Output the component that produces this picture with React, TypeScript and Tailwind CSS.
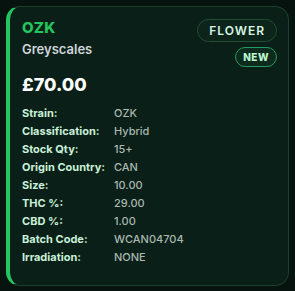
import React from "react";

const rows: [string, string][] = [
  ["Strain:", "OZK"],
  ["Classification:", "Hybrid"],
  ["Stock Qty:", "15+"],
  ["Origin Country:", "CAN"],
  ["Size:", "10.00"],
  ["THC %:", "29.00"],
  ["CBD %:", "1.00"],
  ["Batch Code:", "WCAN04704"],
  ["Irradiation:", "NONE"],
];

export default function App() {
  return (
    <div
      className="w-[295px] h-[291px] bg-[#06130e] p-[6px]"
      style={{ fontFamily: "Inter, 'Noto Sans', sans-serif" }}
    >
      <div className="h-[280px] rounded-[14px] border border-[#1d3f2e] border-l-4 border-l-[#22c55e] bg-[#0a1f17] pl-[12px] pr-[11px] pt-[11px]">
        <div className="flex justify-between">
          <div>
            <div className="text-[15px] font-extrabold text-[#22c55e] leading-[20px] tracking-[0.2px]">OZK</div>
            <div className="mt-[2px] text-[13px] font-semibold text-[#d1d5db] leading-[18px]">Greyscales</div>
          </div>
          <div className="flex flex-col items-end gap-[5px] pt-[1px]">
            <div className="h-[23px] px-[11px] rounded-full border border-[#1f4d36] bg-[#0c2419] text-[12px] font-semibold tracking-[1px] text-[#d6f5e3] flex items-center leading-none">
              FLOWER
            </div>
            <div className="h-[20px] px-[7px] rounded-full border border-[#1f9a63] bg-[#0d2a1d] text-[10px] font-extrabold tracking-[0.5px] text-[#bbf7d0] flex items-center leading-none">
              NEW
            </div>
          </div>
        </div>
        <div className="mt-[6px] text-[18px] font-extrabold text-white leading-[24px]">£70.00</div>
        <div className="mt-[7px] flex flex-col">
          {rows.map(([k, v]) => (
            <div key={k} className="flex h-[18px] items-center text-[11px] leading-none">
              <div className="w-[92px] font-bold text-[#c8f0d8]">{k}</div>
              <div className="text-[#a9b8b0] font-medium">{v}</div>
            </div>
          ))}
        </div>
      </div>
    </div>
  );
}
